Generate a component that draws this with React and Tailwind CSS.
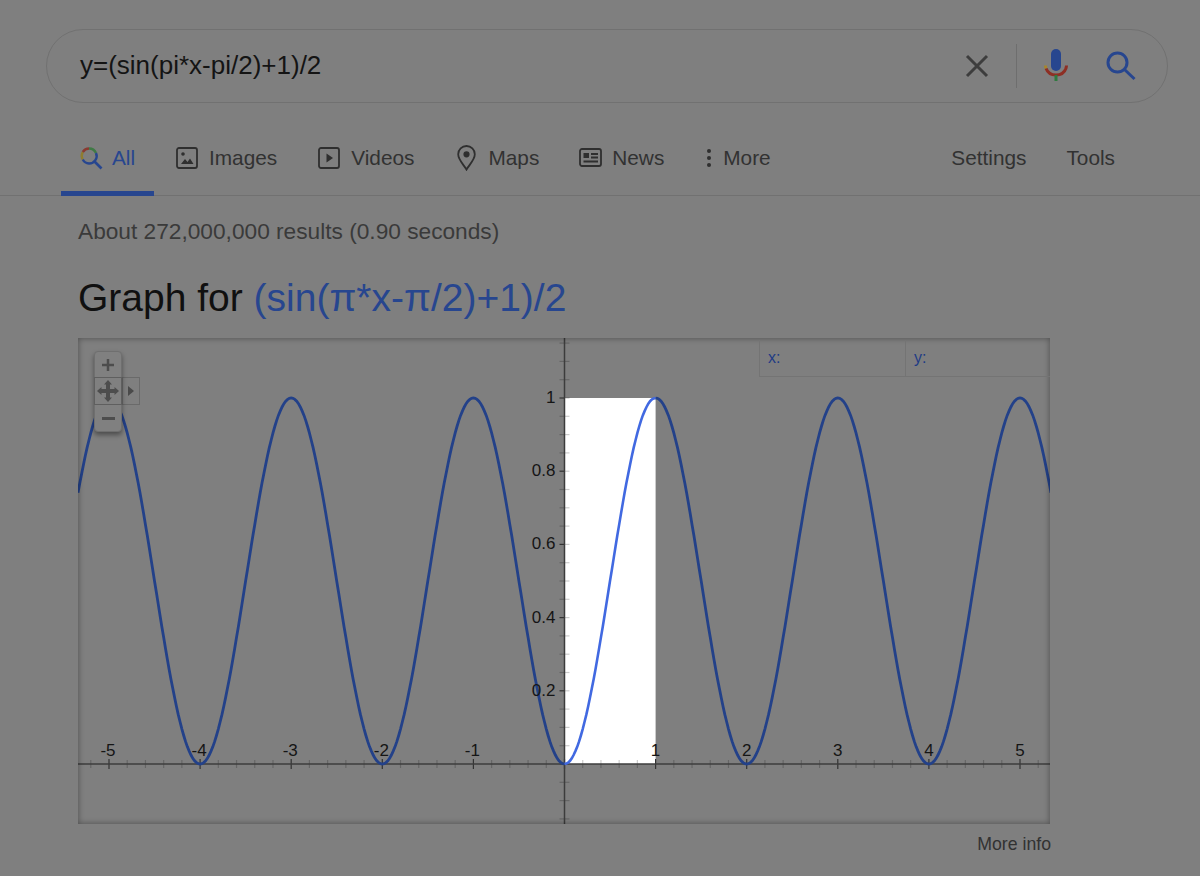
import React from "react";

const X0 = 486.5;
const Y0 = 426;
const UX = 91.1;
const UY = 366;

function curvePath(from, to) {
  const pts = [];
  for (let x = from; x <= to + 0.0001; x += 0.02) {
    const y = (Math.sin(Math.PI * x - Math.PI / 2) + 1) / 2;
    pts.push(`${(X0 + x * UX).toFixed(1)},${(Y0 - y * UY).toFixed(1)}`);
  }
  return "M" + pts.join("L");
}

function ColorSearch() {
  return (
    <svg width="24" height="24" viewBox="0 0 24 24" fill="none" strokeWidth="2.4">
      <path d="M3.800 13.500A7.500 7.500 0 0 1 3.800 6" stroke="#8f7d2f" />
      <path d="M3.800 6A7.500 7.500 0 0 1 10 2.500" stroke="#8a3a30" />
      <path d="M10 2.500A7.500 7.500 0 0 1 17 7" stroke="#3f7a45" />
      <path d="M17 7A7.500 7.500 0 0 1 10 17.500A7.500 7.500 0 0 1 3.800 13.500" stroke="#27468f" />
      <path d="M15.500 15.500l7 7" stroke="#27468f" strokeWidth="2.600" />
    </svg>
  );
}

function ClearIcon() {
  return (
    <svg width="24" height="24" viewBox="0 0 24 24" fill="none">
      <path d="M2 2l20 20M22 2L2 22" stroke="#3d3d3d" strokeWidth="3" />
    </svg>
  );
}

function LensIcon() {
  return (
    <svg width="30" height="30" viewBox="0 0 30 30" fill="none" stroke="#27468f" strokeWidth="3">
      <circle cx="11.500" cy="11.500" r="9.500" />
      <path d="M18.500 18.500l10 9.500" />
    </svg>
  );
}

function MicIcon() {
  return (
    <svg width="26" height="36" viewBox="0 0 26 36" fill="none">
      <rect x="8" y="1" width="10" height="22" rx="5" fill="#27468f" />
      <path d="M2.500 17.500c0 1 .2 2 .6 3" stroke="#a8862a" strokeWidth="3" />
      <path d="M3.100 20.500C4.500 24.500 8.300 27 13 27s8.500-2.500 9.900-6.500c.3-1 .6-2 .6-3" stroke="#8e2f24" strokeWidth="3" />
      <rect x="11.500" y="27" width="3" height="6" fill="#2f7a3f" />
    </svg>
  );
}

function VideoIcon() {
  return (
    <svg width="22" height="22" viewBox="0 0 22 22" fill="none">
      <rect x="1" y="1" width="20" height="20" rx="2" stroke="#2f2f2f" strokeWidth="1.800" />
      <path d="M8.500 6.500v9l6.500-4.500z" fill="#2f2f2f" />
    </svg>
  );
}

function PictureIcon() {
  return (
    <svg width="22" height="22" viewBox="0 0 22 22" fill="none">
      <rect x="1" y="1" width="20" height="20" rx="2" stroke="#2f2f2f" strokeWidth="1.800" />
      <circle cx="7" cy="7" r="1.800" fill="#2f2f2f" />
      <path d="M5 17l4-5 2.500 3 2.500-3.500 3.500 5.500z" fill="#2f2f2f" />
    </svg>
  );
}

function PinIcon() {
  return (
    <svg width="19" height="26" viewBox="0 0 19 26" fill="none" stroke="#2f2f2f" strokeWidth="1.800">
      <path d="M9.500 24.500C7 20 1.200 15 1.200 9.300a8.300 8.300 0 0 1 16.600 0C17.800 15 12 20 9.500 24.500z" />
      <circle cx="9.500" cy="9.300" r="2.200" fill="#2f2f2f" />
    </svg>
  );
}

function NewsIcon() {
  return (
    <svg width="23" height="19" viewBox="0 0 23 19" fill="none">
      <rect x="1" y="1" width="21" height="17" rx="2" stroke="#2f2f2f" strokeWidth="1.800" />
      <rect x="4.500" y="5" width="5.500" height="5" fill="#2f2f2f" />
      <path d="M12 6h7M12 9.500h7M4.500 13.500h14.500" stroke="#2f2f2f" strokeWidth="1.800" />
    </svg>
  );
}

function Graph() {
  const xTicks = [];
  for (let i = -26; i <= 27; i++) xTicks.push(i);
  const yTicks = [];
  for (let i = -6; i <= 24; i++) yTicks.push(i);
  const xLabels = [-5, -4, -3, -2, -1, 1, 2, 3, 4, 5];
  const yLabels = ["0.2", "0.4", "0.6", "0.8", "1"];
  const faint = "rgba(0,0,0,0.2)";

  return (
    <svg width="972" height="486" viewBox="0 0 972 486" className="block">
      <rect x={X0} y={Y0 - UY} width={UX} height={UY} fill="#ffffff" />
      {xTicks.map((i) => {
        const x = X0 + i * UX * 0.2;
        const major = i % 5 === 0;
        return (
          <line key={i} x1={x} x2={x} y1={Y0 - (major ? 5 : 4)} y2={Y0 + (major ? 5 : 4)} stroke={major ? "#333333" : faint} strokeWidth="1.200" />
        );
      })}
      {yTicks.map((i) => {
        const y = Y0 - i * UY * 0.05;
        const major = i % 4 === 0 && i !== 0;
        return (
          <g key={i}>
            <line x1={X0 - 5} x2={X0} y1={y} y2={y} stroke={major ? "#333333" : faint} strokeWidth="1.200" />
            <line x1={X0} x2={X0 + 5} y1={y} y2={y} stroke={faint} strokeWidth="1.200" />
          </g>
        );
      })}
      <line x1="0" x2="972" y1={Y0} y2={Y0} stroke="#3c3c3c" strokeWidth="1.500" />
      <line x1={X0} x2={X0} y1="0" y2="486" stroke="#3c3c3c" strokeWidth="1.500" />
      <path d={curvePath(-5.34, 0)} fill="none" stroke="#234189" strokeWidth="2.800" />
      <path d={curvePath(0, 1)} fill="none" stroke="#4169e1" strokeWidth="2.600" />
      <path d={curvePath(1, 5.34)} fill="none" stroke="#234189" strokeWidth="2.800" />
      {xLabels.map((n) => (
        <text key={n} x={X0 + n * UX - (n < 0 ? 1 : 0)} y={Y0 - 8} textAnchor="middle" fontSize="17" fill="#151515" fontFamily="Liberation Sans, sans-serif">
          {n}
        </text>
      ))}
      {yLabels.map((t) => (
        <text key={t} x={X0 - 9} y={Y0 - parseFloat(t) * UY + 5} textAnchor="end" fontSize="17" fill="#151515" fontFamily="Liberation Sans, sans-serif">
          {t}
        </text>
      ))}
    </svg>
  );
}

function ZoomControls() {
  return (
    <div className="absolute left-[16px] top-[13px] w-[28px]">
      <div className="absolute left-[28px] top-[26px] w-[18px] h-[28px] border border-[#6a6a6a] flex items-center justify-center">
        <span className="w-0 h-0 border-y-[5px] border-y-transparent border-l-[6px] border-l-[#4a4a4a]" />
      </div>
      <div className="relative w-[28px] h-[81px] rounded-[4px] border border-[#6f6f6f] bg-[#808080] shadow-[0_3px_5px_rgba(0,0,0,0.4)] flex flex-col">
        <div className="h-[25px] flex items-center justify-center">
          <svg width="16" height="16" viewBox="0 0 16 16"><path d="M8 2v12M2 8h12" stroke="#4d4d4d" strokeWidth="2.500" /></svg>
        </div>
        <div className="h-[28px] -mx-px border border-[#5f5f5f] flex items-center justify-center">
          <svg width="24" height="24" viewBox="0 0 24 24" fill="#4d4d4d">
            <path d="M12 1l4 4.500h-2V10H18.500V8l4.500 4-4.500 4v-2H14V18.500H16L12 23l-4-4.500h2V14H5.500V16L1 12l4.500-4v2H10V5.500H8z" />
          </svg>
        </div>
        <div className="flex-1 flex items-center justify-center">
          <span className="block w-[13px] h-[3px] bg-[#4d4d4d]" />
        </div>
      </div>
    </div>
  );
}

function Tab({ icon, label, className }) {
  return (
    <div className={`flex items-center ${className}`}>
      {icon}
      <span>{label}</span>
    </div>
  );
}

export default function App() {
  return (
    <div className="w-[1200px] h-[876px] overflow-hidden bg-[#7f7f7f] font-['Liberation_Sans',Arial,sans-serif]">
      <div className="pt-[29px] pl-[46px]">
        <div className="w-[1122px] h-[74px] rounded-[37px] border border-[#717171] flex items-center pl-[33px] pr-[31px]">
          <span className="flex-1 text-[26px] text-[#141414] -mt-[2px]">y=(sin(pi*x-pi/2)+1)/2</span>
          <ClearIcon />
          <div className="w-px h-[44px] bg-[#6e6e6e] ml-[27px] mr-[26px]" />
          <MicIcon />
          <div className="ml-[37px]"><LensIcon /></div>
        </div>
      </div>

      <div className="mt-[34px] h-[59px] border-b border-[#717171] flex text-[20.800px] text-[#323232] pl-[61px] pr-[85px]">
        <div className="w-[93px] h-[59px] border-b-[5px] border-[#27468f] pl-[18px] flex items-start pt-[5px] text-[#27468f]">
          <Tab className="gap-[9px]" icon={<ColorSearch />} label="All" />
        </div>
        <div className="flex-1 flex items-start pt-[5px]">
          <Tab className="ml-[22px] gap-[11px]" icon={<PictureIcon />} label="Images" />
          <Tab className="ml-[41px] gap-[11px]" icon={<VideoIcon />} label="Videos" />
          <Tab className="ml-[43px] gap-[12px]" icon={<PinIcon />} label="Maps" />
          <Tab className="ml-[40px] gap-[10px]" icon={<NewsIcon />} label="News" />
          <Tab className="ml-[43px] gap-[12px]" icon={<span className="flex flex-col gap-[3px] w-[4px]"><i className="block w-[4px] h-[4px] rounded-full bg-[#2f2f2f]" /><i className="block w-[4px] h-[4px] rounded-full bg-[#2f2f2f]" /><i className="block w-[4px] h-[4px] rounded-full bg-[#2f2f2f]" /></span>} label="More" />
        </div>
        <div className="flex gap-[40px] pt-[5px]">
          <span>Settings</span>
          <span>Tools</span>
        </div>
      </div>

      <div className="pl-[78px] w-[1051px]">
        <p className="mt-[21px] text-[22.700px] leading-[28px] text-[#3a3a3a]">About 272,000,000 results (0.90 seconds)</p>
        <h2 className="mt-[31px] text-[39px] leading-[44px] text-[#101010]">
          Graph for <span className="text-[#27468f]">(sin(π*x-π/2)+1)/2</span>
        </h2>
        <div className="relative mt-[18px] w-[972px] h-[486px] overflow-hidden">
          <Graph />
          <div className="absolute inset-0 shadow-[inset_0_0_6px_rgba(0,0,0,0.4)] pointer-events-none" />
          <ZoomControls />
          <div className="absolute right-0 top-[2px] w-[291px] h-[37px] border-l border-b border-[#747474] flex text-[16px] text-[#1f3c85]">
            <div className="w-[146px] border-r border-[#747474] pl-[8px] pt-[9px] leading-[18px]">x:</div>
            <div className="flex-1 pl-[8px] pt-[9px] leading-[18px]">y:</div>
          </div>
        </div>
        <div className="mt-[10px] text-right text-[17.700px] leading-[20px] text-[#323232]">More info</div>
      </div>
    </div>
  );
}
